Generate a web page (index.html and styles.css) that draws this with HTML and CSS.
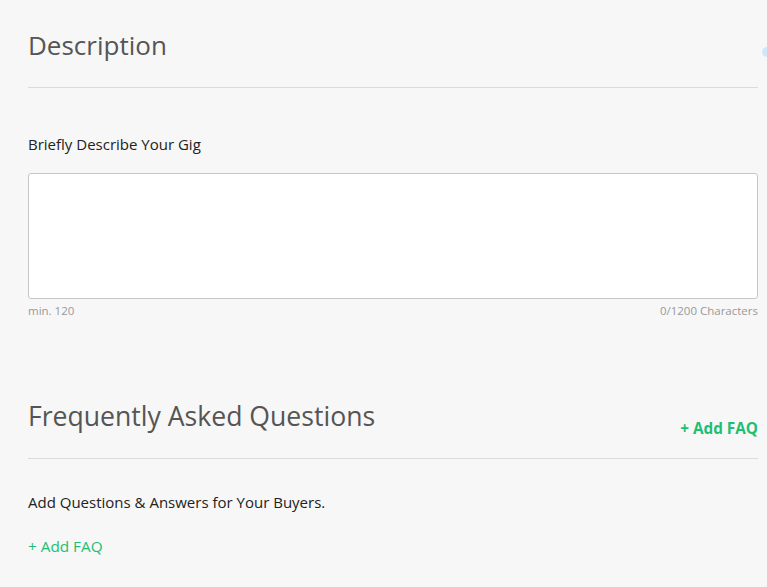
FILE: index.html
```html
<!DOCTYPE html>
<html>
<head>
<meta charset="utf-8">
<link rel="stylesheet" href="styles.css">
</head>
<body>
<div class="page">
  <section class="section">
    <div class="section-head">
      <h2 class="title">Description</h2>
    </div>
    <div class="field">
      <label class="label">Briefly Describe Your Gig</label>
      <div class="textarea"></div>
      <div class="counter">
        <span>min. 120</span>
        <span>0/1200 Characters</span>
      </div>
    </div>
  </section>
  <section class="section faq">
    <div class="section-head faq-head">
      <h2 class="title">Frequently Asked Questions</h2>
      <a class="add-top">+ Add FAQ</a>
    </div>
    <p class="text">Add Questions &amp; Answers for Your Buyers.</p>
    <a class="add-link">+ Add FAQ</a>
  </section>
  <div class="edge-dot"></div>
</div>
</body>
</html>
```

FILE: styles.css
```css
html, body {
  margin: 0;
  padding: 0;
  background: #f7f7f7;
}
body {
  font-family: "Open Sans", "Liberation Sans", sans-serif;
  color: #222;
  overflow: hidden;
}
.page {
  position: relative;
  width: 767px;
  height: 587px;
  padding: 0 9px 0 28px;
  box-sizing: border-box;
}
.section-head {
  display: flex;
  justify-content: space-between;
  align-items: flex-end;
  border-bottom: 1px solid #dadbdd;
}
.title {
  margin: 0;
  font-weight: 400;
  font-size: 26px;
  color: #555;
  line-height: 32px;
}
.section:first-child .section-head {
  padding-top: 29px;
  padding-bottom: 26px;
}
.field {
  padding-top: 46px;
}
.label {
  display: block;
  font-size: 15px;
  line-height: 20px;
  color: #222;
}
.textarea {
  margin-top: 19px;
  height: 124px;
  background: #fff;
  border: 1px solid #c5c6c9;
  border-radius: 3px;
}
.counter {
  display: flex;
  justify-content: space-between;
  font-size: 11.5px;
  color: #999;
  margin-top: 5px;
  line-height: 14px;
}
.faq {
  margin-top: 82px;
}
.faq-head {
  padding-bottom: 26px;
}
.faq-head .title {
  font-size: 26.6px;
}
.add-top {
  color: #1dbf73;
  font-weight: 700;
  font-size: 15.3px;
  line-height: 20px;
  margin-bottom: -6px;
}
.text {
  margin: 33px 0 0;
  font-size: 15px;
  line-height: 20px;
  color: #222;
}
.add-link {
  display: inline-block;
  margin-top: 24px;
  color: #1dbf73;
  font-size: 15.3px;
  line-height: 20px;
}
.edge-dot {
  position: absolute;
  left: 762px;
  top: 47px;
  width: 10px;
  height: 10px;
  border-radius: 50%;
  background: #cfe8f5;
}
```
